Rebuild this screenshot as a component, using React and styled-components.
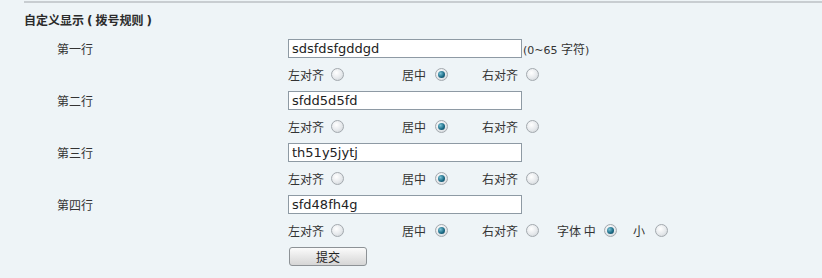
import React from "react";
import styled, { createGlobalStyle } from "styled-components";

const Global = createGlobalStyle`
  html, body { margin: 0; padding: 0; background: #eef4f7; }
  body {
    font-family: "DejaVu Sans", Verdana, "Noto Sans CJK SC", sans-serif;
    font-size: 12px;
    color: #333;
  }
`;

const Page = styled.div`
  width: 822px;
  height: 278px;
  box-sizing: border-box;
  padding-left: 24px;
  padding-top: 1px;
  overflow: hidden;
`;

const Section = styled.div`
  border-top: 2px solid #c8cdd1;
`;

const Title = styled.div`
  font-family: "Noto Sans CJK SC", sans-serif;
  font-weight: bold;
  font-size: 12px;
  color: #2b2b2b;
  height: 18px;
  line-height: 18px;
  margin-top: 8px;
  margin-bottom: 6px;
`;

const Paren = styled.span`
  font-family: "DejaVu Sans", sans-serif;
  margin: 0 3px;
`;

const Grid = styled.div`
  display: grid;
  grid-template-columns: 264px 1fr;
  grid-auto-rows: 26px;
  align-items: center;
`;

const Label = styled.div`
  padding-left: 33px;
  font-family: "Noto Sans CJK SC", sans-serif;
  color: #333;
`;

const Cell = styled.div`
  display: flex;
  align-items: center;
`;

const TextInput = styled.input`
  box-sizing: border-box;
  width: 234px;
  height: 19px;
  margin: 0;
  padding: 0 3px;
  border: 1px solid #8e9aa4;
  background: #fff;
  font-family: "DejaVu Sans", Verdana, sans-serif;
  font-size: 13px;
  color: #222;
  outline: none;
`;

const Hint = styled.span`
  margin-left: 1px;
  font-family: "DejaVu Sans", "Noto Sans CJK SC", sans-serif;
  font-size: 11px;
  color: #333;
`;

const HintCjk = styled.span`
  font-family: "Noto Sans CJK SC", sans-serif;
  font-size: 12px;
`;

const Option = styled.label`
  display: flex;
  align-items: center;
  width: ${(p) => p.$w}px;
  font-family: "Noto Sans CJK SC", sans-serif;
  color: #333;
  flex: none;
`;

const OptText = styled.span`
  width: ${(p) => p.$tw}px;
  flex: none;
`;

const Radio = styled.span`
  box-sizing: border-box;
  width: 13px;
  height: 13px;
  border-radius: 50%;
  border: 1px solid #a3a9ae;
  background: radial-gradient(circle at 40% 35%, #ffffff 0%, #e6e9ec 55%, #c9ced2 100%);
  display: flex;
  align-items: center;
  justify-content: center;
  &::after {
    content: "";
    display: ${(p) => (p.$on ? "block" : "none")};
    width: 7px;
    height: 7px;
    border-radius: 50%;
    background: radial-gradient(circle at 35% 35%, #7cc3d6 0%, #1d6d88 55%, #0b3a50 100%);
  }
`;

const Button = styled.button`
  box-sizing: border-box;
  width: 78px;
  height: 19px;
  margin: 0 0 0 1px;
  padding: 0;
  border: 1px solid #8d9296;
  border-radius: 3px;
  background: linear-gradient(#fbfbfb, #e6e6e6 55%, #d6d6d6);
  font-family: "Noto Sans CJK SC", sans-serif;
  font-size: 12px;
  color: #222;
`;

const rows = [
  { label: "第一行", value: "sdsfdsfgddgd", hint: true },
  { label: "第二行", value: "sfdd5d5fd" },
  { label: "第三行", value: "th51y5jytj" },
  { label: "第四行", value: "sfd48fh4g", font: true },
];

function AlignRow({ font }) {
  return (
    <Cell>
      <Option $w={114}>
        <OptText $tw={43}>左对齐</OptText>
        <Radio />
      </Option>
      <Option $w={80}>
        <OptText $tw={33}>居中</OptText>
        <Radio $on />
      </Option>
      <Option $w={font ? 75 : 60}>
        <OptText $tw={44}>右对齐</OptText>
        <Radio />
      </Option>
      {font && (
        <>
          <Option $w={76}>
            <OptText $tw={47}>字体 中</OptText>
            <Radio $on />
          </Option>
          <Option $w={40}>
            <OptText $tw={22}>小</OptText>
            <Radio />
          </Option>
        </>
      )}
    </Cell>
  );
}

export default function App() {
  return (
    <>
      <Global />
      <Page>
        <Section>
          <Title>
            自定义显示<Paren>(</Paren>拨号规则<Paren>)</Paren>
          </Title>
          <Grid>
            {rows.map((r) => (
              <React.Fragment key={r.label}>
                <Label>{r.label}</Label>
                <Cell>
                  <TextInput defaultValue={r.value} />
                  {r.hint && (
                    <Hint>
                      (0~65 <HintCjk>字符</HintCjk>)
                    </Hint>
                  )}
                </Cell>
                <div />
                <AlignRow font={r.font} />
              </React.Fragment>
            ))}
            <div />
            <Cell>
              <Button>提交</Button>
            </Cell>
          </Grid>
        </Section>
      </Page>
    </>
  );
}
